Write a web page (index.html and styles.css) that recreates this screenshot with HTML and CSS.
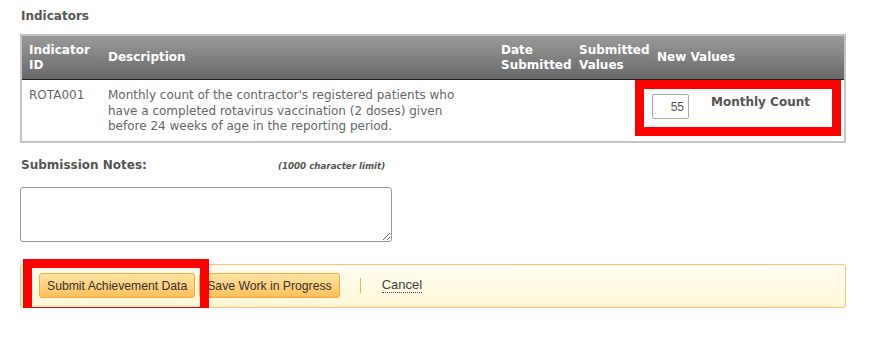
FILE: index.html
```html
<!DOCTYPE html>
<html lang="en">
<head>
    <meta charset="UTF-8">
    <title>Indicators</title>
    <link rel="stylesheet" href="styles.css">
</head>
<body>
    <div class="page">
        <h2 class="section-title">Indicators</h2>
        <table class="indicators">
            <colgroup>
                <col class="col-id">
                <col class="col-desc">
                <col class="col-date">
                <col class="col-sub">
                <col class="col-new">
            </colgroup>
            <thead>
                <tr>
                    <th>Indicator ID</th>
                    <th>Description</th>
                    <th>Date Submitted</th>
                    <th>Submitted Values</th>
                    <th>New Values</th>
                </tr>
            </thead>
            <tbody>
                <tr>
                    <td>ROTA001</td>
                    <td class="desc">Monthly count of the contractor's registered patients who have a completed rotavirus vaccination (2 doses) given before 24 weeks of age in the reporting period.</td>
                    <td></td>
                    <td></td>
                    <td class="new-values">
                        <div class="value-row">
                            <input type="text" class="value-input" value="55">
                            <span class="value-label">Monthly Count</span>
                        </div>
                        <div class="highlight highlight-values"></div>
                    </td>
                </tr>
            </tbody>
        </table>

        <div class="notes-head">
            <label class="notes-label">Submission Notes:</label>
            <span class="notes-limit">(1000 character limit)</span>
        </div>
        <textarea class="notes"></textarea>

        <div class="actions">
            <button class="btn">Submit Achievement Data</button>
            <button class="btn btn-save">Save Work in Progress</button>
            <span class="sep"></span>
            <a class="cancel" href="#">Cancel</a>
            <div class="highlight highlight-submit"></div>
        </div>
    </div>
</body>
</html>
```

FILE: styles.css
```css
body {
    margin: 0;
    font-family: "DejaVu Sans", Verdana, sans-serif;
    font-size: 12px;
    color: #666;
    background: #fff;
}
.page {
    padding: 8px 20px 0 20px;
    width: 826px;
}
.section-title {
    font-size: 12px;
    font-weight: bold;
    color: #555;
    margin: 0 0 10px 1px;
    line-height: 16px;
}
.indicators {
    width: 826px;
    border-collapse: collapse;
    table-layout: fixed;
    border: 2px solid #c4c4c4;
}
.col-id { width: 80px; }
.col-desc { width: 393px; }
.col-date { width: 78px; }
.col-sub { width: 78px; }
.indicators th {
    background: linear-gradient(#9a9a9a, #686868);
    color: #fff;
    font-weight: bold;
    text-align: left;
    padding: 6px 7px 6px 7px;
    line-height: 15px;
    height: 31px;
    border-bottom: 1px solid #222;
}
.indicators td {
    padding: 8px 7px 6px 7px;
    vertical-align: top;
    line-height: 15.5px;
}
.indicators td.desc {
    padding-right: 30px;
}
.indicators td.new-values {
    position: relative;
    padding: 14px 8px 0 2px;
}
.value-row {
    display: flex;
    align-items: flex-start;
}
.value-input {
    box-sizing: border-box;
    width: 37px;
    height: 25px;
    padding: 2px 4px;
    border: 1px solid #aaa;
    border-radius: 2px;
    text-align: right;
    font-family: "Liberation Sans", Arial, sans-serif;
    font-size: 12px;
    color: #555;
}
.value-label {
    margin: 1px 0 0 22px;
    font-weight: bold;
    color: #555;
}
.highlight {
    position: absolute;
    border: 9px solid #f00;
    pointer-events: none;
}
.highlight-values {
    left: -15px;
    top: 0;
    width: 188px;
    height: 38px;
}
.notes-head {
    display: flex;
    align-items: baseline;
    margin: 15px 0 0 1px;
}
.notes-label {
    font-weight: bold;
    color: #555;
    width: 257px;
}
.notes-limit {
    font-size: 8.7px;
    font-style: italic;
    font-weight: bold;
    color: #555;
}
.notes {
    display: block;
    box-sizing: border-box;
    width: 372px;
    height: 55px;
    margin-top: 15px;
    border: 1px solid #999;
    border-radius: 3px;
}
.actions {
    position: relative;
    display: flex;
    align-items: center;
    margin-top: 22px;
    height: 42px;
    padding: 0 0 0 18px;
    border: 1px solid #fbc27c;
    border-radius: 3px;
    background: linear-gradient(#fffdf2, #fff7d6);
}
.btn {
    font-family: "Liberation Sans", Arial, sans-serif;
    font-size: 12.2px;
    color: #333;
    height: 25px;
    padding: 0 7px;
    border: 1px solid #f4a941;
    border-radius: 3px;
    background: linear-gradient(#ffe3a4, #ffbf5a);
    cursor: pointer;
}
.btn-save {
    margin-left: 4px;
}
.sep {
    width: 1px;
    height: 15px;
    background: #f9a84b;
    margin: 0 21px 0 20px;
}
.cancel {
    color: #444;
    font-family: "Liberation Sans", Arial, sans-serif;
    font-size: 13px;
    text-decoration: none;
    border-bottom: 1px dotted #444;
    line-height: 14px;
}
.highlight-submit {
    left: 2px;
    top: -6px;
    width: 168px;
    height: 39px;
}
```
